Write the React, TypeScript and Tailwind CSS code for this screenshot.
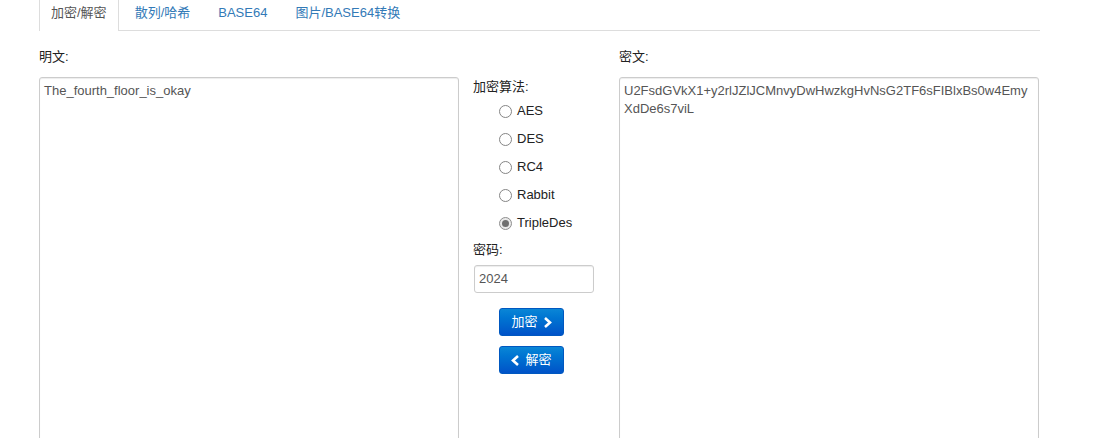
import React from "react";

const font = { fontFamily: '"Liberation Sans", "Noto Sans CJK SC", Arial, sans-serif' };

function Radio({ label, checked }: { label: string; checked?: boolean }) {
  return (
    <div className="flex items-center h-[28px] pl-[26px]">
      <span
        className={
          "w-[13px] h-[13px] rounded-full border flex items-center justify-center " +
          (checked ? "border-[#8f8f8f] bg-[#e9e9e9]" : "border-[#858585] bg-white")
        }
      >
        {checked && <span className="w-[7px] h-[7px] rounded-full bg-[#6f6f6f]" />}
      </span>
      <span className="ml-[5px] text-[13px] text-[#222]">{label}</span>
    </div>
  );
}

function Chevron({ dir }: { dir: "left" | "right" }) {
  return (
    <svg width="9" height="11" viewBox="0 0 9 11" className="inline-block">
      {dir === "right" ? (
        <path d="M2 1 L7 5.5 L2 10" fill="none" stroke="white" strokeWidth="2.6" strokeLinejoin="miter" />
      ) : (
        <path d="M7 1 L2 5.5 L7 10" fill="none" stroke="white" strokeWidth="2.6" strokeLinejoin="miter" />
      )}
    </svg>
  );
}

export default function App() {
  return (
    <div className="w-[1120px] h-[438px] overflow-hidden bg-white" style={font}>
      <div className="pl-[39px] w-[1040px]">
        <div className="flex h-[31px] border-b border-[#ddd] text-[13px]">
          <div className="h-[31px] -mb-px bg-white border-x border-[#ddd] px-[11px] pt-[3px] leading-[20px] text-[#555] mr-[2px]">
            加密/解密
          </div>
          <div className="px-[14px] pt-[3px] leading-[20px] text-[#337ab7]">散列/哈希</div>
          <div className="px-[14px] pt-[3px] leading-[20px] text-[#337ab7]">BASE64</div>
          <div className="px-[14px] pt-[3px] leading-[20px] text-[#337ab7]">图片/BASE64转换</div>
        </div>

        <div className="flex mt-[16px]">
          <div className="w-[420px] shrink-0">
            <div className="text-[13px] leading-[20px] text-[#222] mb-[10px]">明文:</div>
            <div className="w-[420px] h-[400px] border border-[#ccc] rounded-[3px] shadow-[inset_0_1px_1px_rgba(0,0,0,0.075)] px-[4px] py-[4px] text-[13px] leading-[18px] text-[#555]">
              The_fourth_floor_is_okay
            </div>
          </div>

          <div className="w-[160px] shrink-0 pl-[14px] pt-[30px]">
            <div className="text-[13px] leading-[20px] text-[#222]">加密算法:</div>
            <Radio label="AES" />
            <Radio label="DES" />
            <Radio label="RC4" />
            <Radio label="Rabbit" />
            <Radio label="TripleDes" checked />
            <div className="text-[13px] leading-[20px] text-[#222] mt-[3px]">密码:</div>
            <div className="mt-[5px] ml-[1px] w-[120px] h-[28px] border border-[#ccc] rounded-[3px] shadow-[inset_0_1px_1px_rgba(0,0,0,0.075)] px-[4px] flex items-center text-[13px] text-[#555]">
              2024
            </div>
            <div className="ml-[26px] mt-[15px] flex flex-col gap-[10px]">
              <div className="w-[65px] h-[28px] rounded-[3px] border border-[#0058c0] bg-gradient-to-b from-[#0b86d6] to-[#0052c8] text-white text-[13px] flex items-center justify-center gap-[5px]">
                <span>加密</span>
                <Chevron dir="right" />
              </div>
              <div className="w-[65px] h-[28px] rounded-[3px] border border-[#0058c0] bg-gradient-to-b from-[#0b86d6] to-[#0052c8] text-white text-[13px] flex items-center justify-center gap-[5px]">
                <Chevron dir="left" />
                <span>解密</span>
              </div>
            </div>
          </div>

          <div className="w-[420px] shrink-0">
            <div className="text-[13px] leading-[20px] text-[#222] mb-[10px]">密文:</div>
            <div className="w-[420px] h-[400px] border border-[#ccc] rounded-[3px] shadow-[inset_0_1px_1px_rgba(0,0,0,0.075)] px-[4px] py-[4px] text-[13px] leading-[18px] text-[#555]">
              U2FsdGVkX1+y2rlJZlJCMnvyDwHwzkgHvNsG2TF6sFIBlxBs0w4Emy
              <br />
              XdDe6s7viL
            </div>
          </div>
        </div>
      </div>
    </div>
  );
}
